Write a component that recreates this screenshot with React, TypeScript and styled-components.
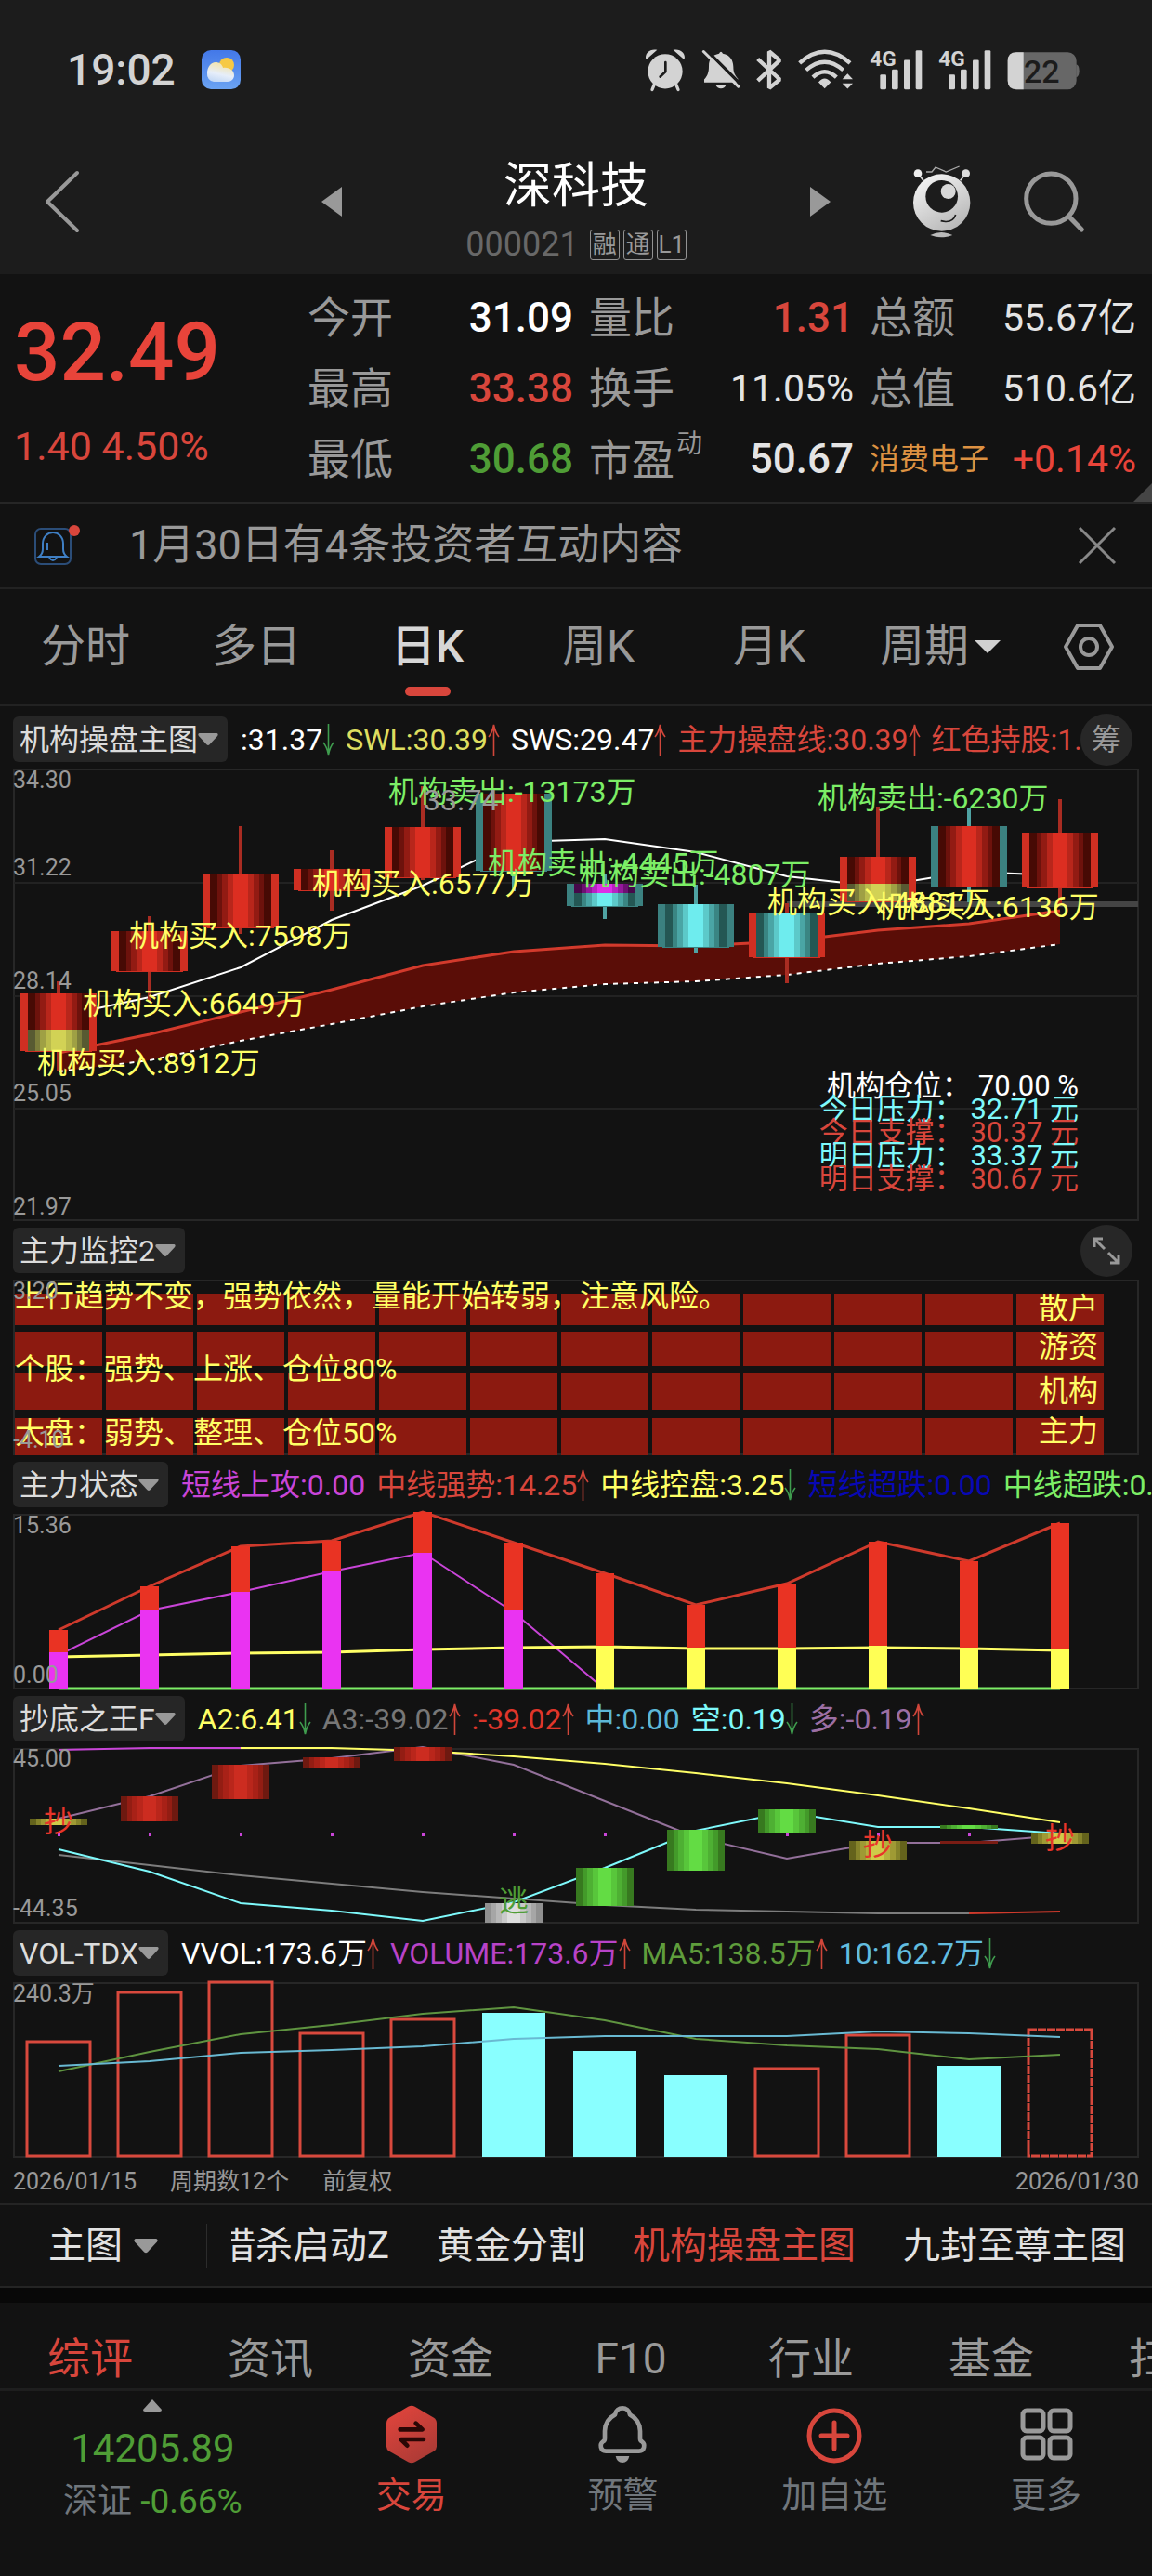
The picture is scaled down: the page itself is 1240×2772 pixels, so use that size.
import React from "react";
import styled, { createGlobalStyle } from "styled-components";

const GlobalStyle = createGlobalStyle`
  * { box-sizing: border-box; }
  body {
    margin: 0;
    background: #121212;
    color: #999;
    font-family: Roboto, "Noto Sans CJK SC", sans-serif;
  }
  h1, p, dl, dd, dt { margin: 0; font-weight: 400; }
  button {
    margin: 0;
    padding: 0;
    border: 0;
    background: none;
    color: inherit;
    font: inherit;
    cursor: pointer;
  }
  a { color: inherit; text-decoration: none; }
  svg { display: block; flex: none; overflow: visible; }
`;

const RED = "#d8463c";
const YELLOW = "#ffff66";
const MAGENTA = "#c945d8";
const CYAN = "#7ef9fb";
const LIME = "#7cee66";

const Page = styled.main`
  display: flex;
  flex-direction: column;
  min-height: 100vh;
  overflow: hidden;
`;

/* ---------- status bar and title ---------- */

const Top = styled.header`
  background: #1c1c1c;
`;

const StatusBar = styled.div`
  display: flex;
  align-items: center;
  height: 139px;
  padding: 10px 78px 0 72px;
`;

const Clock = styled.time`
  color: #d3d3d3;
  font-size: 46px;
  font-weight: 500;
  line-height: 56px;
  margin-right: 28px;
`;

const StatusIcons = styled.div`
  display: flex;
  align-items: center;
  gap: 17px;
  margin-left: auto;
`;

const TitleBar = styled.div`
  display: grid;
  grid-template-columns: 1fr 548px 1fr;
  align-items: center;
  height: 156px;
  padding: 0 48px;
`;

const StockSwitcher = styled.div`
  display: flex;
  justify-content: space-between;
  align-items: center;
`;

const TitleBlock = styled.div`
  display: flex;
  flex-direction: column;
  align-items: center;
  padding-top: 20px;
`;

const StockName = styled.h1`
  color: #fff;
  font-size: 52px;
  line-height: 58px;
`;

const StockCode = styled.div`
  display: flex;
  align-items: center;
  gap: 4px;
  margin-top: 14px;
  color: #686868;
  font-size: 36px;
  line-height: 38px;
`;

const Tag = styled.span`
  display: flex;
  justify-content: center;
  align-items: center;
  width: 32px;
  height: 33px;
  border: 1px solid #929292;
  border-radius: 3px;
  color: #999;
  font-size: 26px;
  line-height: 30px;
  &:first-of-type { margin-left: 8px; }
`;

const TitleActions = styled.div`
  display: flex;
  justify-content: flex-end;
  align-items: center;
  gap: 54px;
  margin-right: 24px;
`;

/* ---------- quote ---------- */

const Quote = styled.section`
  position: relative;
  display: grid;
  grid-template-columns: 316px 1fr;
  padding: 9px 17px 8px 15px;
  border-bottom: 2px solid #262626;
`;

const PriceBlock = styled.div`
  display: flex;
  flex-direction: column;
  color: ${RED};
`;

const Price = styled.strong`
  color: #e8443a;
  font-size: 87px;
  font-weight: 500;
  line-height: 100px;
  margin-top: 25px;
`;

const Change = styled.span`
  margin-top: 18px;
  font-size: 43px;
  line-height: 66px;
`;

const Stats = styled.dl`
  display: grid;
  grid-template-columns: 286px 285px 1fr;
  column-gap: 17px;
`;

const Stat = styled.div`
  display: flex;
  justify-content: space-between;
  align-items: center;
  height: 76px;
`;

const StatLabel = styled.dt<{ $sector?: boolean }>`
  color: ${(p) => (p.$sector ? "#dd9242" : "#999")};
  font-size: ${(p) => (p.$sector ? 32 : 46)}px;
  line-height: 60px;
  white-space: nowrap;
  sup {
    font-size: 28px;
    line-height: 28px;
    vertical-align: 24px;
    margin-left: 2px;
  }
`;

const StatValue = styled.dd<{ $color?: string; $small?: boolean }>`
  color: ${(p) => p.$color || "#e4e4e4"};
  font-size: ${(p) => (p.$small ? 41 : 44)}px;
  font-weight: ${(p) => (p.$small ? 400 : 500)};
  line-height: 60px;
  white-space: nowrap;
`;

const Corner = styled.span`
  position: absolute;
  right: 0;
  bottom: 0;
  border: 10px solid #454545;
  border-top-color: transparent;
  border-left-color: transparent;
`;

/* ---------- notice ---------- */

const Notice = styled.section`
  display: flex;
  align-items: center;
  height: 92px;
  padding: 0 39px 0 36px;
  border-bottom: 2px solid #222;
`;

const NoticeText = styled.a`
  flex: 1;
  margin-left: 50px;
  font-size: 45px;
  line-height: 60px;
`;

/* ---------- period tabs ---------- */

const PeriodTabs = styled.nav`
  display: grid;
  grid-template-columns: repeat(6, 184fr) 136fr;
  height: 126px;
  border-bottom: 2px solid #222;
`;

const PeriodTab = styled.button<{ $active?: boolean }>`
  position: relative;
  display: flex;
  justify-content: center;
  align-items: center;
  gap: 6px;
  color: ${(p) => (p.$active ? "#d6d6d6" : "#999")};
  font-size: 48px;
  font-weight: ${(p) => (p.$active ? 500 : 400)};
  line-height: 60px;
  white-space: nowrap;
  &::after {
    content: "";
    position: absolute;
    bottom: 9px;
    width: 49px;
    height: 10px;
    border-radius: 5px;
    background: ${(p) => (p.$active ? RED : "transparent")};
  }
`;

/* ---------- indicator panels ---------- */

const Panels = styled.section`
  padding: 4px 14px 0;
`;

const PanelHead = styled.div<{ $bleed?: boolean }>`
  display: flex;
  align-items: center;
  height: 63px;
  margin-right: ${(p) => (p.$bleed ? -14 : 0)}px;
`;

const IndicatorButton = styled.button`
  display: flex;
  flex: none;
  align-items: center;
  height: 49px;
  padding: 0 10px 0 7px;
  border-radius: 6px;
  background: #262626;
  color: #dcdcdc;
  font-size: 32px;
  line-height: 48px;
  white-space: nowrap;
`;

const Legend = styled.div`
  display: flex;
  flex: 1;
  gap: 12px;
  min-width: 0;
  margin-left: 14px;
  overflow: hidden;
`;

const LegendItem = styled.span<{ $color: string }>`
  display: flex;
  flex: none;
  align-items: center;
  color: ${(p) => p.$color};
  font-size: 32px;
  line-height: 48px;
  white-space: nowrap;
`;

const RoundButton = styled.button`
  display: flex;
  flex: none;
  justify-content: center;
  align-items: center;
  width: 56px;
  height: 56px;
  margin: 0 7px 0 auto;
  border-radius: 50%;
  background: #272727;
  color: #999;
  font-size: 32px;
  line-height: 56px;
`;

const Plot = styled.svg`
  width: 100%;
  height: auto;
`;

const AxisText = styled.text`
  fill: #999;
  font-size: 25px;
`;

const NoteText = styled.text`
  font-size: 32px;
`;

const LevelText = styled.text`
  font-size: 31px;
`;

const DateRow = styled.div`
  display: flex;
  gap: 36px;
  height: 49px;
  align-items: center;
  padding-top: 3px;
  font-size: 25px;
  line-height: 36px;
  span:last-child { margin-left: auto; }
`;

/* ---------- template strip ---------- */

const TemplateBar = styled.nav`
  display: flex;
  align-items: center;
  height: 91px;
  border-top: 2px solid #242424;
  border-bottom: 2px solid #242424;
  color: #e2e2e2;
  font-size: 40px;
  line-height: 56px;
`;

const TemplatePicker = styled.button`
  display: flex;
  flex: none;
  align-items: center;
  gap: 12px;
  height: 48px;
  padding: 0 52px 0 52px;
  border-right: 1px solid #2c2c2c;
`;

const TemplateScroller = styled.div`
  flex: 1;
  min-width: 0;
  margin-left: 26px;
  overflow: hidden;
`;

const TemplateList = styled.div`
  display: flex;
  gap: 51px;
  margin-left: -14px;
`;

const TemplateItem = styled.button<{ $active?: boolean }>`
  flex: none;
  color: ${(p) => (p.$active ? RED : "inherit")};
  line-height: 56px;
  white-space: nowrap;
`;

/* ---------- info tabs and bottom bar ---------- */

const Band = styled.div`
  height: 16px;
  background: #080808;
`;

const InfoTabs = styled.nav`
  display: flex;
  height: 95px;
  padding-top: 27px;
  border-bottom: 3px solid #1e1e1e;
  overflow: hidden;
`;

const InfoTab = styled.a<{ $active?: boolean }>`
  flex: 0 0 194px;
  color: ${(p) => (p.$active ? RED : "#999")};
  font-size: 46px;
  line-height: 66px;
  text-align: center;
`;

const BottomBar = styled.nav`
  display: grid;
  grid-template-columns: 329fr repeat(4, 228fr);
  padding: 9px 0 50px;
`;

const IndexQuote = styled.button`
  display: flex;
  flex-direction: column;
  align-items: center;
  color: #4f9d36;
`;

const IndexValue = styled.span`
  margin-top: 14px;
  font-size: 42px;
  line-height: 52px;
`;

const IndexChange = styled.span`
  margin-top: 3px;
  font-size: 37px;
  line-height: 56px;
  span { color: #70767c; }
`;

const NavButton = styled.button<{ $active?: boolean }>`
  display: flex;
  flex-direction: column;
  align-items: center;
  gap: 6px;
  padding-top: 6px;
  color: ${(p) => (p.$active ? RED : "#70767c")};
  font-size: 38px;
  line-height: 54px;
`;

/* ---------- small drawings ---------- */

const Caret = ({ w = 22, color = "#999" }: { w?: number; color?: string }) => (
  <svg width={w} height={w * 0.6} viewBox="0 0 22 13" fill={color}>
    <path d="M1.5 0h19q2 1 .6 2.8l-8.600 9.400q-1.500 1.300-3 0L.9 2.800Q-.5 1 1.500 0z" />
  </svg>
);

const TrendArrow = ({ up }: { up: boolean }) => (
  <svg width="13" height="34" viewBox="0 0 13 34" fill="none" stroke={up ? "#d0463a" : "#3f9c4e"} strokeWidth="1.600">
    <path d={up ? "M6.500 34V1M1 14Q5 9 6.500 1Q8 9 12 14" : "M6.500 0V33M1 20Q5 25 6.500 33Q8 25 12 20"} />
  </svg>
);

const Weather = () => (
  <svg width="42" height="42" viewBox="0 0 42 42">
    <defs>
      <linearGradient id="sky" x1="0" y1="0" x2="0" y2="1">
        <stop offset="0" stopColor="#4378e8" />
        <stop offset="1" stopColor="#6ba3f2" />
      </linearGradient>
      <linearGradient id="cloud" x1="0.600" y1="0" x2="0.300" y2="1">
        <stop offset="0" stopColor="#f4e3a4" />
        <stop offset="0.600" stopColor="#e6eefa" />
        <stop offset="1" stopColor="#c3d8f5" />
      </linearGradient>
    </defs>
    <rect width="42" height="42" rx="10" fill="url(#sky)" />
    <circle cx="27" cy="16" r="8" fill="#f6c944" />
    <path d="M13 34a8 8 0 0 1-7-9c0-7 4-12 9-12 4 0 7 2 8 6 7-1 12 3 12 8 0 4-3 7-7 7z" fill="url(#cloud)" />
  </svg>
);

const Alarm = () => (
  <svg width="44" height="47" viewBox="38 30 132 140" fill="#d3d3d3">
    <path d="M42 68C36 48 58 32 78 38L44 68zM166 68C172 48 150 32 130 38L164 68z" />
    <circle cx="104" cy="107" r="56" />
    <path d="M70 146l-8 20M138 146l8 20" stroke="#d3d3d3" strokeWidth="10" strokeLinecap="round" />
    <path d="M105 78v30l-17 16" stroke="#1c1c1c" strokeWidth="8" fill="none" strokeLinecap="round" />
  </svg>
);

const BellOff = () => (
  <svg width="42" height="47" viewBox="222 30 126 140" fill="#d3d3d3">
    <path d="M279 50q6-12 12 0c24 5 33 20 34 42 0 18 4 26 15 39v12H231v-10c12-13 15-25 15-43 0-24 12-36 33-40zM268 150h34q-5 12-17 12t-17-12z" />
    <path d="M238 38L354 154" stroke="#1c1c1c" strokeWidth="10" />
    <path d="M229 43L341 156" stroke="#d3d3d3" strokeWidth="9" strokeLinecap="round" />
  </svg>
);

const Bluetooth = () => (
  <svg width="28" height="47" viewBox="396 30 84 140" fill="none" stroke="#d3d3d3" strokeWidth="13" strokeLinejoin="bevel">
    <path d="M401 67l71 66-34 28V43l34 28-71 66" />
  </svg>
);

const Wifi = () => (
  <svg width="60" height="47" viewBox="536 30 180 140" fill="none" stroke="#d3d3d3" strokeWidth="13">
    <path d="M541 80Q622 8 704 80M562 103Q622 50 682 103M584 126Q622 90 660 126" />
    <path d="M602 142Q622 118 642 142L622 162zM679 132l17-18 17 18zM679 146h34l-17 17z" fill="#d3d3d3" stroke="none" />
  </svg>
);

const Signal = () => (
  <svg width="57" height="47" viewBox="762 30 171 140" fill="#d3d3d3">
    <text x="763" y="90" fontSize="68" fontWeight="700">4G</text>
    <rect x="796" y="117" width="20" height="48" rx="4" />
    <rect x="834" y="101" width="20" height="64" rx="4" />
    <rect x="873" y="70" width="20" height="95" rx="4" />
    <rect x="911" y="39" width="20" height="126" rx="4" />
  </svg>
);

const Battery = () => (
  <svg width="78" height="47" viewBox="1213 30 234 140">
    <path d="M1436 84q10 2 10 21t-10 21z" fill="#676767" />
    <rect x="1215" y="45" width="222" height="120" rx="28" fill="#676767" />
    <path d="M1266 45h-23q-28 0-28 28v64q0 28 28 28h23z" fill="#d3d3d3" />
    <text x="1267" y="143" fontSize="102" fontWeight="500" fill="#1c1c1c">22</text>
  </svg>
);

const Robot = () => (
  <svg width="64" height="80" viewBox="905 410 192 240" fill="none">
    <defs>
      <linearGradient id="robot" x1="0.200" y1="0" x2="0.800" y2="1">
        <stop offset="0" stopColor="#f4f4f4" />
        <stop offset="1" stopColor="#b4b4b4" />
      </linearGradient>
    </defs>
    <path d="M950 434h18l12-15 34 15 43-18" stroke="#aaa" strokeWidth="4" />
    <path d="M925 442l16 20M1076 442l-16 20" stroke="#ddd" strokeWidth="5" />
    <circle cx="923" cy="439" r="13" fill="#eee" />
    <circle cx="1078" cy="439" r="13" fill="#ddd" />
    <circle cx="1000" cy="533" r="92" fill="url(#robot)" />
    <circle cx="1000" cy="513" r="52" fill="#1c1c1c" />
    <circle cx="1021" cy="497" r="24" fill="#d8d8d8" />
    <path d="M997 592q38 10 48-20" stroke="#1c1c1c" strokeWidth="5" />
    <path d="M963 638q36-18 72 0-36 14-72 0z" fill="#bbb" />
  </svg>
);

const Search = () => (
  <svg width="68" height="68" viewBox="1260 427 204 204" fill="none" stroke="#999" strokeWidth="15">
    <circle cx="1354" cy="519" r="80" />
    <path d="M1411 576l42 43" strokeLinecap="round" />
  </svg>
);

/* ---------- chart helpers ---------- */

const SLOTS = Array.from({ length: 12 }, (_, i) => i);
const cx = (i: number) => 63 + i * 98;
const line = (ys: number[], from = 0) => ys.map((y, i) => `${cx(i + from)},${y}`).join(" ");

const SHADES: Record<string, string[]> = {
  red: ["#470a04", "#6d120c", "#921b13", "#b8261b", "#dc2e21"],
  cyan: ["#245754", "#3a8583", "#4aa5a5", "#5cc9c9", "#6eecee"],
  yellow: ["#585a32", "#7c7d3b", "#9fa044", "#babb4c", "#d2d255"],
  purple: ["#46084a", "#6d1073", "#94189c", "#b822c2", "#dd2fe6"],
  softRed: ["#6e1910", "#931d13", "#a82117", "#b9261b", "#cc2c20"],
  green: ["#37791f", "#439a2a", "#4eb033", "#58c63b", "#63dc44"],
  olive: ["#64631c", "#85832a", "#9f9a34", "#b5b03c", "#cfcb49"],
  silver: ["#909090", "#a6a6a6", "#b8b8b8", "#cacaca", "#dedede"],
};

/* A bar shaded in steps from its dark edges to a bright middle. */
const ShadedBar = ({ i, top, bottom, shade, half = 33 }: { i: number; top: number; bottom: number; shade: string; half?: number }) => (
  <g>
    {SHADES[shade].map((fill, n) => {
      const h = Math.round(half * [1, 0.76, 0.6, 0.42, 0.24][n]);
      return <rect key={n} x={cx(i) - h} y={top} width={h * 2} height={bottom - top} fill={fill} />;
    })}
  </g>
);

type Candle = { high: number; low: number; frame: "red" | "teal"; parts: [string, number, number][] };

const CANDLES: Candle[] = [
  { high: 1056, low: 1153, frame: "red", parts: [["red", 1069, 1108], ["yellow", 1108, 1131]] },
  { high: 986, low: 1077, frame: "red", parts: [["red", 1002, 1045]] },
  { high: 889, low: 1005, frame: "red", parts: [["red", 941, 998]] },
  { high: 915, low: 980, frame: "red", parts: [["red", 935, 958]] },
  { high: 846, low: 947, frame: "red", parts: [["red", 890, 944]] },
  { high: 854, low: 959, frame: "teal", parts: [["red", 854, 937]] },
  { high: 940, low: 989, frame: "teal", parts: [["purple", 951, 961], ["cyan", 961, 975]] },
  { high: 952, low: 1026, frame: "teal", parts: [["cyan", 973, 1019]] },
  { high: 972, low: 1058, frame: "red", parts: [["cyan", 983, 1030]] },
  { high: 868, low: 971, frame: "red", parts: [["red", 922, 951], ["yellow", 951, 970]] },
  { high: 870, low: 971, frame: "teal", parts: [["red", 889, 954]] },
  { high: 860, low: 974, frame: "red", parts: [["red", 896, 955]] },
];

const CandleMark = ({ i, c }: { i: number; c: Candle }) => {
  const top = c.parts[0][1];
  const bottom = c.parts[c.parts.length - 1][2];
  const frame = c.frame === "red" ? "#d02f22" : "#3b8180";
  return (
    <g>
      <rect x={cx(i) - 2} y={c.high} width="4" height={c.low - c.high} fill={c.frame === "red" ? "#a92c22" : "#4fa3a3"} />
      <rect x={cx(i) - 41} y={top} width="82" height={bottom - top} fill={frame} />
      <rect x={cx(i) - 36} y={bottom} width="72" height="1" fill={frame} />
      {c.parts.map(([shade, a, b]) => (
        <ShadedBar key={shade} i={i} top={a} bottom={b} shade={shade} />
      ))}
    </g>
  );
};

const UPPER = [1133, 1113, 1089, 1065, 1039, 1024, 1017, 1018, 1013, 1001, 994, 980];
const LOWER = [1153, 1141, 1120, 1102, 1083, 1068, 1059, 1056, 1049, 1037, 1029, 1016];

const NOTES: [string, number, number, string][] = [
  ["机构买入:8912万", 40, 1155, YELLOW],
  ["机构买入:6649万", 89, 1091, YELLOW],
  ["机构买入:7598万", 139, 1018, YELLOW],
  ["机构买入:6577万", 336, 962, YELLOW],
  ["机构卖出:-13173万", 418, 863, LIME],
  ["机构卖出:-4445万", 525, 940, LIME],
  ["机构卖出:-4807万", 624, 952, LIME],
  ["机构卖出:-6230万", 880, 870, LIME],
  ["机构买入:4881万", 826, 982, YELLOW],
  ["机构买入:6136万", 943, 987, YELLOW],
];

const LEVELS: [string, string][] = [
  ["机构仓位： 70.00 %", "#fff"],
  ["今日压力： 32.71 元", CYAN],
  ["今日支撑： 30.37 元", RED],
  ["明日压力： 33.37 元", CYAN],
  ["明日支撑： 30.67 元", RED],
];

const Frame = ({ top, height }: { top: number; height: number }) => (
  <rect x="15" y={top} width="1210" height={height} fill="none" stroke="#272727" strokeWidth="2" />
);

const MainPlot = () => (
  <Plot viewBox="14 827 1212 487" role="img" aria-label="机构操盘主图">
    <Frame top={828} height={485} />
    {[949, 1071, 1192].map((y) => (
      <rect key={y} x="15" y={y} width="1210" height="2" fill="#222" />
    ))}
    <polygon points={`${line(UPPER)} ${line(LOWER).split(" ").reverse().join(" ")}`} fill="#5a0d07" />
    <polyline points={line(UPPER)} fill="none" stroke="#d23a2c" strokeWidth="3" />
    <polyline points={line(LOWER)} fill="none" stroke="#fff" strokeWidth="2" strokeDasharray="5 6" />
    <polyline points={line([1094, 1073, 1041, 990, 953, 906, 903, 917, 943, 954, 938, 942])} fill="none" stroke="#fff" strokeWidth="2" />
    <rect x="847" y="970" width="378" height="6" fill="#454545" />
    {CANDLES.map((c, i) => (
      <CandleMark key={i} i={i} c={c} />
    ))}
    {[["34.30", 848], ["31.22", 942], ["28.14", 1064], ["25.05", 1185], ["21.97", 1307]].map(([t, y]) => (
      <AxisText key={t} x="14" y={y}>{t}</AxisText>
    ))}
    {NOTES.map(([t, x, y, fill]) => (
      <NoteText key={t} x={x} y={y} fill={fill}>{t}</NoteText>
    ))}
    <NoteText x="456" y="872" fill="#999">33.74</NoteText>
    {LEVELS.map(([t, fill], n) => (
      <LevelText key={t} x="1161" y={1179 + n * 25} fill={fill} textAnchor="end">{t}</LevelText>
    ))}
  </Plot>
);

const MonitorPlot = () => (
  <Plot viewBox="14 1377 1212 189" role="img" aria-label="主力监控2">
    <Frame top={1378} height={187} />
    {[[1392, 34], [1433, 37], [1477, 40], [1526, 40]].map(([y, h]) =>
      SLOTS.map((i) => <rect key={`${y}-${i}`} x={cx(i) - 47} y={y} width="94" height={h} fill="#8c1a10" />)
    )}
    <NoteText fill={YELLOW} x="16" y="1406">上行趋势不变，强势依然，量能开始转弱，注意风险。</NoteText>
    <NoteText fill={YELLOW} x="16" y="1484">个股：强势、上涨、仓位80%</NoteText>
    <NoteText fill={YELLOW} x="16" y="1553">大盘：弱势、整理、仓位50%</NoteText>
    {[["散户", 1419], ["游资", 1460], ["机构", 1508], ["主力", 1551]].map(([t, y]) => (
      <NoteText key={t} fill={YELLOW} x="1118" y={y}>{t}</NoteText>
    ))}
    <AxisText x="14" y="1398">3.20</AxisText>
    <AxisText x="14" y="1558">-4.10</AxisText>
  </Plot>
);

const FORCE = [1754, 1707, 1664, 1658, 1627, 1660, 1693, 1727, 1704, 1659, 1680, 1639];
const FORCE_BASE = [1778, 1733, 1713, 1691, 1671, 1733, 1771, 1773, 1773, 1771, 1773, 1775];

const StatePlot = () => (
  <Plot viewBox="14 1629 1212 189" role="img" aria-label="主力状态">
    <Frame top={1630} height={187} />
    <polyline points={line(FORCE)} fill="none" stroke="#cf3a2c" strokeWidth="3" />
    <polyline points={line([1781, 1733, 1713, 1691, 1671, 1735, 1818])} fill="none" stroke={MAGENTA} strokeWidth="2" />
    <polyline points={line([1783, 1781, 1779, 1778, 1775, 1773, 1772, 1774, 1774, 1773, 1774, 1776])} fill="none" stroke={YELLOW} strokeWidth="3" />
    <polyline points={`${cx(0)},1817 ${cx(11)},1817`} stroke={LIME} strokeWidth="3" />
    {SLOTS.map((i) => (
      <g key={i}>
        <rect x={cx(i) - 10} y={FORCE[i]} width="20" height={1818 - FORCE[i]} fill="#e93323" />
        <rect x={cx(i) - 10} y={FORCE_BASE[i]} width="20" height={1818 - FORCE_BASE[i]} fill={i < 6 ? "#ea33f2" : "#ffff55"} />
      </g>
    ))}
    <AxisText x="14" y="1650">15.36</AxisText>
    <AxisText x="14" y="1811">0.00</AxisText>
  </Plot>
);

const SWINGS: [number, number, number, string][] = [
  [0, 1957, 1964, "olive"],
  [1, 1933, 1960, "softRed"],
  [2, 1899, 1936, "softRed"],
  [3, 1891, 1902, "softRed"],
  [4, 1880, 1895, "softRed"],
  [5, 2048, 2069, "silver"],
  [6, 2010, 2051, "green"],
  [7, 1969, 2013, "green"],
  [8, 1947, 1973, "green"],
  [9, 1981, 2002, "olive"],
  [10, 1964, 1968, "green"],
  [11, 1973, 1984, "olive"],
];

const BottomPlot = () => (
  <Plot viewBox="14 1881 1212 189" role="img" aria-label="抄底之王F">
    <Frame top={1882} height={187} />
    {[0, 1, 2, 3, 4, 5, 6, 8, 9, 10].map((i) => (
      <rect key={i} x={cx(i) - 1} y="1973" width="3" height="3" fill={MAGENTA} />
    ))}
    <g fill="none" strokeWidth="2">
      <polyline points={line([1996, 2007, 2018, 2027, 2036, 2043, 2050, 2055, 2057, 2059, 2059])} stroke="#7d7d7d" />
      <polyline points={line([2059, 2057], 10)} stroke="#cf3a2c" />
      <polyline points={line([1957, 1933, 1900, 1892, 1880, 1899, 1938, 1977, 2000, 1983, 1983, 1975])} stroke="#93709a" />
      <polyline points={line([1990, 2014, 2048, 2056, 2067, 2047, 2010, 1970, 1950, 1966, 1966, 1973])} stroke={CYAN} />
      <polyline points={line([1883, 1881, 1881])} stroke={MAGENTA} />
      <polyline points={line([1881, 1881, 1884, 1890, 1898, 1908, 1919, 1932, 1946, 1961], 2)} stroke={YELLOW} />
    </g>
    {SWINGS.map(([i, top, bottom, shade]) => (
      <ShadedBar key={i} i={i} top={top} bottom={bottom} shade={shade} half={31} />
    ))}
    <rect x={cx(10) - 31} y="1981" width="62" height="3" fill="#7a1c14" />
    {[[0, 1971], [9, 1996], [11, 1989]].map(([i, y]) => (
      <NoteText key={i} x={cx(i)} y={y} fill="#e8352a" textAnchor="middle">抄</NoteText>
    ))}
    <NoteText x={cx(5)} y="2057" fill="#4f9d36" textAnchor="middle">逃</NoteText>
    <AxisText x="14" y="1901">45.00</AxisText>
    <AxisText x="14" y="2062">-44.35</AxisText>
  </Plot>
);

const VOLUME_TOPS = [2197, 2144, 2133, 2188, 2173, 2166, 2207, 2233, 2226, 2190, 2223, 2184];
const FALLING = [5, 6, 7, 10];

const VolumePlot = () => (
  <Plot viewBox="14 2133 1212 189" role="img" aria-label="VOL-TDX">
    <Frame top={2134} height={187} />
    {VOLUME_TOPS.map((y, i) =>
      FALLING.includes(i) ? (
        <rect key={i} x={cx(i) - 34} y={y} width="68" height={2321 - y} fill="#89ffff" />
      ) : (
        <rect key={i} x={cx(i) - 34} y={y} width="68" height={2320 - y} fill="none" stroke="#d8493d" strokeWidth="3" strokeDasharray={i === 11 ? "9 1" : undefined} />
      )
    )}
    <polyline points={line([2229, 2208, 2189, 2179, 2167, 2160, 2174, 2194, 2201, 2205, 2216, 2211])} fill="none" stroke="#5f9440" strokeWidth="2" />
    <polyline points={line([2223, 2218, 2209, 2206, 2202, 2194, 2191, 2191, 2191, 2186, 2188, 2192])} fill="none" stroke="#69b9d2" strokeWidth="2" />
    <AxisText x="14" y="2154">240.3万</AxisText>
  </Plot>
);

/* ---------- page data ---------- */

type Item = [string, string, boolean?];

const HeadRow = ({ name, items = [], bleed, children }: { name: string; items?: Item[]; bleed?: boolean; children?: React.ReactNode }) => (
  <PanelHead $bleed={bleed}>
    <IndicatorButton aria-haspopup="listbox">
      {name}
      <Caret />
    </IndicatorButton>
    {items.length > 0 && (
      <Legend>
        {items.map(([text, color, up], i) => (
          <LegendItem key={i} $color={color}>
            {text}
            {up !== undefined && <TrendArrow up={up} />}
          </LegendItem>
        ))}
      </Legend>
    )}
    {children}
  </PanelHead>
);

const STATS: { label: string; sup?: string; value: string; color?: string; small?: boolean; sector?: boolean }[] = [
  { label: "今开", value: "31.09", color: "#fff" },
  { label: "量比", value: "1.31", color: RED },
  { label: "总额", value: "55.67亿", small: true },
  { label: "最高", value: "33.38", color: RED },
  { label: "换手", value: "11.05%", small: true },
  { label: "总值", value: "510.6亿", small: true },
  { label: "最低", value: "30.68", color: "#4f9d36" },
  { label: "市盈", sup: "动", value: "50.67" },
  { label: "消费电子", value: "+0.14%", color: "#e8443a", small: true, sector: true },
];

export default function App() {
  return (
    <Page>
      <GlobalStyle />
      <Top>
        <StatusBar>
          <Clock>19:02</Clock>
          <Weather />
          <StatusIcons>
            <Alarm />
            <BellOff />
            <Bluetooth />
            <Wifi />
            <Signal />
            <Signal />
            <Battery />
          </StatusIcons>
        </StatusBar>
        <TitleBar>
          <button aria-label="返回">
            <svg width="37" height="66" viewBox="0 0 37 66" fill="none" stroke="#999" strokeWidth="4">
              <path d="M35 2L3 33l32 31" strokeLinecap="round" strokeLinejoin="round" />
            </svg>
          </button>
          <StockSwitcher>
            <button aria-label="上一只">
              <svg width="22" height="32" viewBox="0 0 22 32" fill="#999"><path d="M22 0v32L0 16z" /></svg>
            </button>
            <TitleBlock>
              <StockName>深科技</StockName>
              <StockCode>
                000021
                <Tag>融</Tag>
                <Tag>通</Tag>
                <Tag>L1</Tag>
              </StockCode>
            </TitleBlock>
            <button aria-label="下一只">
              <svg width="22" height="32" viewBox="0 0 22 32" fill="#999"><path d="M0 0v32l22-16z" /></svg>
            </button>
          </StockSwitcher>
          <TitleActions>
            <button aria-label="助手"><Robot /></button>
            <button aria-label="搜索"><Search /></button>
          </TitleActions>
        </TitleBar>
      </Top>

      <Quote>
        <PriceBlock>
          <Price>32.49</Price>
          <Change>1.40 4.50%</Change>
        </PriceBlock>
        <Stats>
          {STATS.map((s) => (
            <Stat key={s.label}>
              <StatLabel $sector={s.sector}>
                {s.label}
                {s.sup && <sup>{s.sup}</sup>}
              </StatLabel>
              <StatValue $color={s.color} $small={s.small}>{s.value}</StatValue>
            </Stat>
          ))}
        </Stats>
        <Corner />
      </Quote>

      <Notice>
        <svg width="53" height="46" viewBox="0 0 53 46" fill="none" stroke="#3f7fc4" strokeWidth="2">
          <rect x="2" y="5" width="38" height="38" rx="6" stroke="#2b4d78" />
          <path d="M6 35q4-3 4-8v-6c0-7 5-12 11-12s11 5 11 12v6q0 5 4 8zM17 36q4 6 8 0M15 20v8" />
          <circle cx="44" cy="7" r="6" fill={RED} stroke="none" />
        </svg>
        <NoticeText href="#notice">1月30日有4条投资者互动内容</NoticeText>
        <button aria-label="关闭">
          <svg width="40" height="40" viewBox="0 0 40 40" stroke="#888" strokeWidth="3"><path d="M1 1l38 38M39 1L1 39" /></svg>
        </button>
      </Notice>

      <PeriodTabs>
        <PeriodTab>分时</PeriodTab>
        <PeriodTab>多日</PeriodTab>
        <PeriodTab $active>日K</PeriodTab>
        <PeriodTab>周K</PeriodTab>
        <PeriodTab>月K</PeriodTab>
        <PeriodTab>
          周期
          <svg width="28" height="14" viewBox="0 0 28 14" fill="#d0d0d0"><path d="M0 0h28L14 14z" /></svg>
        </PeriodTab>
        <PeriodTab aria-label="设置">
          <svg width="54" height="50" viewBox="0 0 54 50" fill="none" stroke="#999" strokeWidth="4">
            <path d="M15 2h24l13 23-13 23H15L2 25z" strokeLinejoin="round" />
            <circle cx="27" cy="25" r="9" />
          </svg>
        </PeriodTab>
      </PeriodTabs>

      <Panels>
        <HeadRow
          name="机构操盘主图"
          items={[
            [":31.37", "#fff", false],
            ["SWL:30.39", "#dede60", true],
            ["SWS:29.47", "#fff", true],
            ["主力操盘线:30.39", RED, true],
            ["红色持股:1.00", RED],
          ]}
        >
          <RoundButton>筹</RoundButton>
        </HeadRow>
        <MainPlot />

        <HeadRow name="主力监控2">
          <RoundButton aria-label="展开">
            <svg width="30" height="30" viewBox="0 0 30 30" fill="none" stroke="#999" strokeWidth="3">
              <path d="M13 13L2 2M2 11V2h9M17 17l11 11M28 19v9h-9" />
            </svg>
          </RoundButton>
        </HeadRow>
        <MonitorPlot />

        <HeadRow
          bleed
          name="主力状态"
          items={[
            ["短线上攻:0.00", MAGENTA],
            ["中线强势:14.25", RED, true],
            ["中线控盘:3.25", YELLOW, false],
            ["短线超跌:0.00", "#0808b4"],
            ["中线超跌:0.00", LIME],
          ]}
        />
        <StatePlot />

        <HeadRow
          name="抄底之王F"
          items={[
            ["A2:6.41", YELLOW, false],
            ["A3:-39.02", "#777", true],
            [":-39.02", "#e0362a", true],
            ["中:0.00", "#5db8d8"],
            ["空:0.19", CYAN, false],
            ["多:-0.19", "#9c6fa4", true],
          ]}
        />
        <BottomPlot />

        <HeadRow
          name="VOL-TDX"
          items={[
            ["VVOL:173.6万", "#fff", true],
            ["VOLUME:173.6万", "#b843c8", true],
            ["MA5:138.5万", "#5f9d3c", true],
            ["10:162.7万", "#62bde0", false],
          ]}
        />
        <VolumePlot />
        <DateRow>
          <span>2026/01/15</span>
          <span>周期数12个</span>
          <span>前复权</span>
          <span>2026/01/30</span>
        </DateRow>
      </Panels>

      <TemplateBar>
        <TemplatePicker aria-haspopup="listbox">
          主图
          <Caret w={26} />
        </TemplatePicker>
        <TemplateScroller>
          <TemplateList>
            <TemplateItem>借杀启动Z</TemplateItem>
            <TemplateItem>黄金分割</TemplateItem>
            <TemplateItem $active>机构操盘主图</TemplateItem>
            <TemplateItem>九封至尊主图</TemplateItem>
          </TemplateList>
        </TemplateScroller>
      </TemplateBar>

      <Band />
      <InfoTabs>
        {["综评", "资讯", "资金", "F10", "行业", "基金", "扫雷"].map((t, i) => (
          <InfoTab key={t} href={`#info-${i}`} $active={i === 0}>{t}</InfoTab>
        ))}
      </InfoTabs>

      <BottomBar>
        <IndexQuote>
          <svg width="22" height="13" viewBox="0 0 22 13" fill="#999"><path d="M11 0l10 11q0 2-2 2H3q-2 0-2-2z" /></svg>
          <IndexValue>14205.89</IndexValue>
          <IndexChange><span>深证</span> -0.66%</IndexChange>
        </IndexQuote>
        <NavButton $active>
          <svg width="56" height="64" viewBox="45 55 168 192">
            <defs>
              <linearGradient id="trade" x1="0.200" y1="0" x2="0.800" y2="1">
                <stop offset="0" stopColor="#e0443c" />
                <stop offset="1" stopColor="#a93a35" />
              </linearGradient>
            </defs>
            <path d="M118 60q11-5 22 0l61 36q9 6 9 17v76q0 9-9 15l-61 35q-11 6-22 0l-61-35q-9-6-9-15v-76q0-11 9-17z" fill="url(#trade)" />
            <path d="M92 134h72l-21-20M168 166H95l20 20" fill="none" stroke="#2a0705" strokeWidth="14" strokeLinecap="round" strokeLinejoin="round" />
          </svg>
          交易
        </NavButton>
        <NavButton>
          <svg width="54" height="64" viewBox="732 55 162 192" fill="none" stroke="#999" strokeWidth="14">
            <path d="M789 86c4-28 44-28 48 0 26 14 33 32 33 53v24q0 8 6 10c12 8 8 31-9 31H759c-17 0-21-23-9-31q6-2 6-10v-24c0-21 7-39 33-53z" strokeLinejoin="round" />
            <path d="M791 220h44q-4 21-22 21t-22-21z" fill="#999" stroke="none" />
          </svg>
          预警
        </NavButton>
        <NavButton>
          <svg width="60" height="64" viewBox="0 0 60 64" fill="none" stroke={RED} strokeWidth="5">
            <circle cx="30" cy="33" r="27" />
            <path d="M30 19v28M16 33h28" strokeLinecap="round" />
          </svg>
          加自选
        </NavButton>
        <NavButton>
          <svg width="58" height="64" viewBox="0 0 58 64" fill="none" stroke="#999" strokeWidth="5">
            <rect x="4" y="6" width="22" height="22" rx="4" />
            <rect x="33" y="6" width="22" height="22" rx="4" />
            <rect x="4" y="35" width="22" height="22" rx="4" />
            <rect x="33" y="35" width="22" height="22" rx="4" />
          </svg>
          更多
        </NavButton>
      </BottomBar>
    </Page>
  );
}
